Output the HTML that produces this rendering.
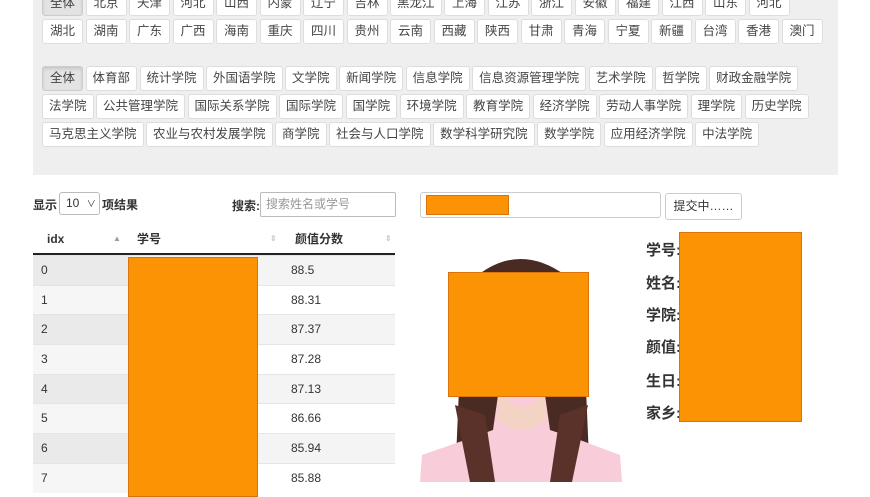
<!DOCTYPE html>
<html><head><meta charset="utf-8"><style>
*{box-sizing:border-box;margin:0;padding:0}
body{width:870px;height:492px;overflow:hidden;background:#fff;font-family:"Liberation Sans","Noto Sans CJK SC",sans-serif;color:#333;position:relative}
.panel{position:absolute;left:33px;top:0;width:805px;height:175px;background:#efefef}
.row{position:absolute;left:42px;display:flex;gap:2.5px}
.b{height:25px;padding:0 6px;min-width:41px;background:#fff;border:1px solid #ddd;border-radius:3px;font-size:12.5px;line-height:23px;text-align:center;color:#444;white-space:nowrap}
.b.a{background:#e3e3e3;border-color:#ccc;box-shadow:inset 0 2px 3px rgba(0,0,0,.12)}
.abs{position:absolute}
.or{position:absolute;background:#fb9304;border:1px solid #d9730a}
.tr{position:absolute;left:33px;width:362px;height:30px;border-top:1px solid #e5e5e5;font-size:12px;line-height:29px}
.tr span{position:absolute}
.lab{position:absolute;left:646px;font-size:15px;font-weight:bold;color:#333}
</style></head><body>
<div class="panel"></div>
<div class="row" style="top:-9px">
<div class="b a">全体</div><div class="b">北京</div><div class="b">天津</div><div class="b">河北</div><div class="b">山西</div><div class="b">内蒙</div><div class="b">辽宁</div><div class="b">吉林</div><div class="b">黑龙江</div><div class="b">上海</div><div class="b">江苏</div><div class="b">浙江</div><div class="b">安徽</div><div class="b">福建</div><div class="b">江西</div><div class="b">山东</div><div class="b">河北</div></div>
<div class="row" style="top:19px">
<div class="b">湖北</div><div class="b">湖南</div><div class="b">广东</div><div class="b">广西</div><div class="b">海南</div><div class="b">重庆</div><div class="b">四川</div><div class="b">贵州</div><div class="b">云南</div><div class="b">西藏</div><div class="b">陕西</div><div class="b">甘肃</div><div class="b">青海</div><div class="b">宁夏</div><div class="b">新疆</div><div class="b">台湾</div><div class="b">香港</div><div class="b">澳门</div></div>
<div class="row" style="top:66px">
<div class="b a">全体</div><div class="b">体育部</div><div class="b">统计学院</div><div class="b">外国语学院</div><div class="b">文学院</div><div class="b">新闻学院</div><div class="b">信息学院</div><div class="b">信息资源管理学院</div><div class="b">艺术学院</div><div class="b">哲学院</div><div class="b">财政金融学院</div></div>
<div class="row" style="top:94px">
<div class="b">法学院</div><div class="b">公共管理学院</div><div class="b">国际关系学院</div><div class="b">国际学院</div><div class="b">国学院</div><div class="b">环境学院</div><div class="b">教育学院</div><div class="b">经济学院</div><div class="b">劳动人事学院</div><div class="b">理学院</div><div class="b">历史学院</div></div>
<div class="row" style="top:122px">
<div class="b">马克思主义学院</div><div class="b">农业与农村发展学院</div><div class="b">商学院</div><div class="b">社会与人口学院</div><div class="b">数学科学研究院</div><div class="b">数学学院</div><div class="b">应用经济学院</div><div class="b">中法学院</div></div>

<div class="abs" style="left:33px;top:196px;font-size:12px;font-weight:bold">显示</div>
<div class="abs" style="left:59px;top:192px;width:41px;height:23px;border:1px solid #bbb;border-radius:3px;font-size:12px;line-height:21px;padding-left:6px;background:#fff">10 <span style="font-size:9px;margin-left:4px">∨</span></div>
<div class="abs" style="left:102px;top:196px;font-size:12px;font-weight:bold">项结果</div>
<div class="abs" style="left:232px;top:197px;font-size:12px;font-weight:bold">搜索:</div>
<div class="abs" style="left:260px;top:192px;width:136px;height:25px;border:1px solid #bbb;border-radius:2px;font-size:12px;line-height:23px;padding-left:5px;color:#999">搜索姓名或学号</div>

<div class="abs" style="left:33px;top:225px;width:362px;height:30px;border-bottom:2px solid #222;font-size:12px;font-weight:bold;line-height:28px">
<span class="abs" style="left:14px">idx</span><span class="abs" style="left:80px;font-size:8px;color:#99a">▲</span>
<span class="abs" style="left:104px">学号</span><span class="abs" style="left:237px;font-size:8px;color:#ccc">⇕</span>
<span class="abs" style="left:262px">颜值分数</span><span class="abs" style="left:352px;font-size:8px;color:#ccc">⇕</span></div>

<div class="tr" style="top:255px;background:#f4f4f4"><span style="left:0;width:95px;height:29px;background:#eaeaea"></span><span style="left:8px">0</span><span style="left:258px">88.5</span></div>
<div class="tr" style="top:285px"><span style="left:0;width:95px;height:29px;background:#f6f6f6"></span><span style="left:8px">1</span><span style="left:258px">88.31</span></div>
<div class="tr" style="top:314px;background:#f4f4f4"><span style="left:0;width:95px;height:29px;background:#eaeaea"></span><span style="left:8px">2</span><span style="left:258px">87.37</span></div>
<div class="tr" style="top:344px"><span style="left:0;width:95px;height:29px;background:#f6f6f6"></span><span style="left:8px">3</span><span style="left:258px">87.28</span></div>
<div class="tr" style="top:374px;background:#f4f4f4"><span style="left:0;width:95px;height:29px;background:#eaeaea"></span><span style="left:8px">4</span><span style="left:258px">87.13</span></div>
<div class="tr" style="top:403px"><span style="left:0;width:95px;height:29px;background:#f6f6f6"></span><span style="left:8px">5</span><span style="left:258px">86.66</span></div>
<div class="tr" style="top:433px;background:#f4f4f4"><span style="left:0;width:95px;height:29px;background:#eaeaea"></span><span style="left:8px">6</span><span style="left:258px">85.94</span></div>
<div class="tr" style="top:463px"><span style="left:0;width:95px;height:29px;background:#f6f6f6"></span><span style="left:8px">7</span><span style="left:258px">85.88</span></div>
<div class="or" style="left:128px;top:257px;width:130px;height:240px"></div>

<div class="abs" style="left:420px;top:192px;width:241px;height:26px;border:1px solid #ccc;border-radius:3px"></div>
<div class="or" style="left:426px;top:195px;width:83px;height:20px"></div>
<div class="abs" style="left:665px;top:193px;width:77px;height:27px;border:1px solid #ccc;border-radius:3px;font-size:12px;line-height:25px;text-align:center">提交中……</div>

<svg class="abs" style="left:420px;top:245px" width="202" height="237" viewBox="0 0 202 237">
<path d="M58 30 Q100 -2 145 30 L165 120 L170 237 L35 237 L40 120 Z" fill="#4a2b24"/>
<path d="M78 150 L125 150 L130 185 L160 195 L200 210 L202 237 L0 237 L2 210 L45 195 L73 185 Z" fill="#f8ccd9"/>
<path d="M78 145 Q103 180 125 145 L125 175 Q103 195 78 175 Z" fill="#f3d4c4"/>
<path d="M35 160 L50 237 L75 237 L65 170 Z M168 160 L152 237 L130 237 L140 170 Z" fill="#5a3229"/>
</svg>
<div class="or" style="left:448px;top:272px;width:141px;height:125px"></div>

<div class="lab" style="top:239px">学号:</div>
<div class="lab" style="top:272px">姓名:</div>
<div class="lab" style="top:304px">学院:</div>
<div class="lab" style="top:336px">颜值:</div>
<div class="lab" style="top:370px">生日:</div>
<div class="lab" style="top:402px">家乡:</div>
<div class="or" style="left:679px;top:232px;width:123px;height:190px"></div>
</body></html>
